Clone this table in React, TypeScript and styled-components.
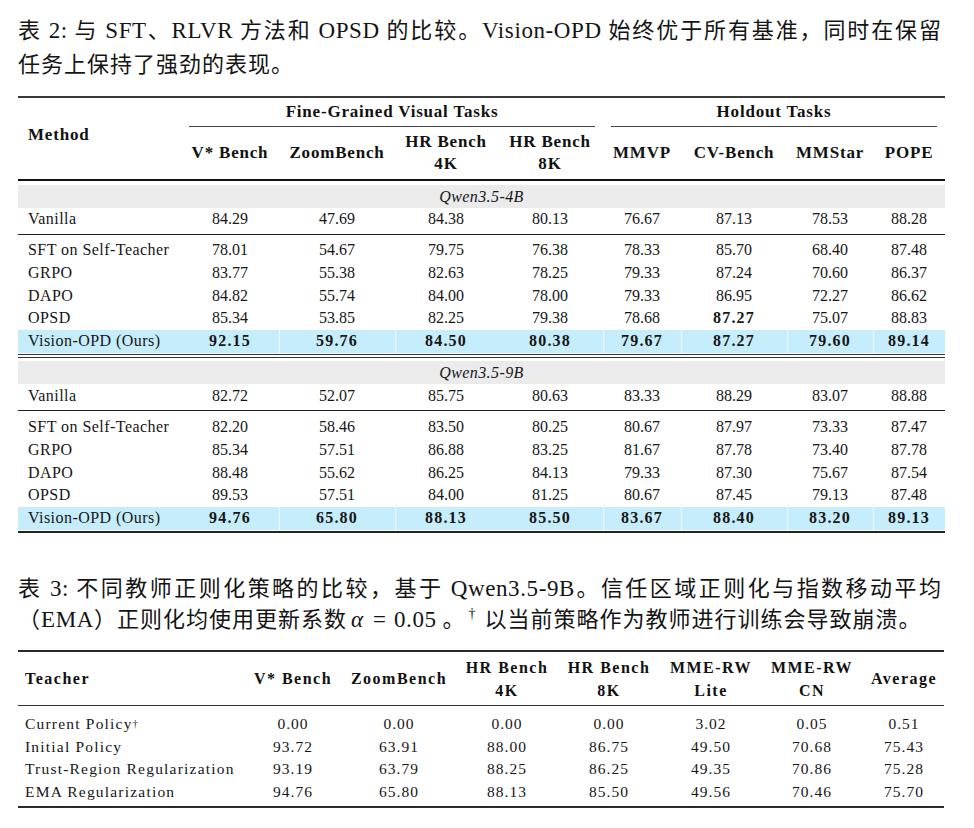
import React from "react";
import styled, { createGlobalStyle } from "styled-components";

const GlobalStyle = createGlobalStyle`
  html, body { margin: 0; padding: 0; background: #ffffff; }
  body {
    font-family: "Liberation Serif", "Noto Sans CJK SC", serif;
    color: #161616;
  }
`;

const T1_COLS = "163px 98px 116px 102px 106px 78px 106px 86px 72px";
const T2_COLS = "228px 94px 118px 98px 106px 98px 104px 80px";

const Page = styled.div`
  width: 974px;
  box-sizing: border-box;
  padding: 11px 29px 20px 18px;
`;

const Caption = styled.div<{ $lh: number; $mt?: number }>`
  width: 924px;
  margin-top: ${(p) => p.$mt ?? 0}px;
  font-family: "Noto Sans CJK SC", sans-serif;
  font-size: 22px;
  line-height: ${(p) => p.$lh}px;
  letter-spacing: 1px;
  color: #141414;
`;

const CaptionLine = styled.div<{ $full?: boolean; $h: number }>`
  height: ${(p) => p.$h}px;
  overflow: visible;
  text-align: ${(p) => (p.$full ? "justify" : "left")};
  text-align-last: ${(p) => (p.$full ? "justify" : "auto")};
`;

const Latin = styled.span`
  font-family: "Liberation Serif", serif;
  font-size: 23px;
  line-height: 1;
  letter-spacing: 0.6px;
`;

const MathItalic = styled.span`
  font-family: "Liberation Serif", serif;
  font-style: italic;
  font-size: 23px;
  line-height: 1;
  margin: 0 2px 0 4px;
`;

const MathOp = styled.span`
  font-family: "Liberation Serif", serif;
  font-size: 23px;
  line-height: 1;
  margin: 0 7px;
`;

const Sup = styled.sup<{ $size: number }>`
  font-family: "Liberation Serif", serif;
  font-size: ${(p) => p.$size}px;
  line-height: 0;
  letter-spacing: 0;
  vertical-align: ${(p) => (p.$size > 12 ? "9px" : "6px")};
  margin: 0 ${(p) => (p.$size > 12 ? 3 : 0)}px;
`;

const Table = styled.div<{ $mt: number; $width: number }>`
  display: flex;
  flex-direction: column;
  width: ${(p) => p.$width}px;
  margin-top: ${(p) => p.$mt}px;
  font-family: "Liberation Serif", serif;
`;

const Rule = styled.div<{ $weight: number; $color?: string; $top?: number; $bottom?: number }>`
  height: ${(p) => p.$weight}px;
  background: ${(p) => p.$color ?? "#222"};
  margin: ${(p) => p.$top ?? 0}px 0 ${(p) => p.$bottom ?? 0}px;
`;

const DoubleRule = styled.div`
  height: 1.5px;
  border-top: 1px solid #333;
  border-bottom: 1px solid #333;
  margin: 1.5px 0 3.75px;
`;

const Head = styled.div<{ $cols: string; $rows: string; $size: number; $ls: number }>`
  display: grid;
  grid-template-columns: ${(p) => p.$cols};
  grid-template-rows: ${(p) => p.$rows};
  font-weight: 700;
  font-size: ${(p) => p.$size}px;
  letter-spacing: ${(p) => p.$ls}px;
  color: #111;
`;

const HeadCell = styled.div<{ $left?: boolean; $span?: boolean; $padLeft?: number; $lift?: number; $lh: number }>`
  display: flex;
  flex-direction: column;
  justify-content: center;
  align-items: ${(p) => (p.$left ? "flex-start" : "center")};
  text-align: center;
  line-height: ${(p) => p.$lh}px;
  white-space: nowrap;
  padding-left: ${(p) => p.$padLeft ?? 0}px;
  padding-bottom: ${(p) => p.$lift ?? 0}px;
  grid-row: ${(p) => (p.$span ? "1 / 3" : "auto")};
`;

const GroupHead = styled.div<{ $from: number; $to: number }>`
  grid-row: 1;
  grid-column: ${(p) => p.$from} / ${(p) => p.$to};
  margin: 0 8px;
  border-bottom: 1px solid #444;
  display: flex;
  align-items: center;
  justify-content: center;
  white-space: nowrap;
`;

const Band = styled.div<{ $mt: number }>`
  height: 23px;
  margin-top: ${(p) => p.$mt}px;
  background: #ebebeb;
  display: flex;
  align-items: center;
  justify-content: center;
  font-style: italic;
  font-size: 16px;
  letter-spacing: 0.4px;
`;

const Row = styled.div<{ $cols: string; $h: number; $highlight?: boolean; $size: number }>`
  display: grid;
  grid-template-columns: ${(p) => p.$cols};
  height: ${(p) => p.$h}px;
  background: ${(p) => (p.$highlight ? "#c6edfb" : "transparent")};
  font-size: ${(p) => p.$size}px;
`;

const Label = styled.div<{ $pad: number; $ls: number }>`
  display: flex;
  align-items: center;
  padding-left: ${(p) => p.$pad}px;
  letter-spacing: ${(p) => p.$ls}px;
  white-space: nowrap;
`;

const Num = styled.div<{ $bold?: boolean; $sep?: boolean; $ls: number }>`
  display: flex;
  align-items: center;
  justify-content: center;
  font-weight: ${(p) => (p.$bold ? 700 : 400)};
  letter-spacing: ${(p) => (p.$bold ? 1.2 : p.$ls)}px;
  box-shadow: ${(p) => (p.$sep ? "inset 1px 0 0 rgba(255,255,255,0.85)" : "none")};
`;

type Val = string | { v: string; b: true };
type DataRowT = { label: React.ReactNode; vals: Val[]; highlight?: boolean };

const B = (v: string): Val => ({ v, b: true });

const group4B: DataRowT[] = [
  { label: "SFT on Self-Teacher", vals: ["78.01", "54.67", "79.75", "76.38", "78.33", "85.70", "68.40", "87.48"] },
  { label: "GRPO", vals: ["83.77", "55.38", "82.63", "78.25", "79.33", "87.24", "70.60", "86.37"] },
  { label: "DAPO", vals: ["84.82", "55.74", "84.00", "78.00", "79.33", "86.95", "72.27", "86.62"] },
  { label: "OPSD", vals: ["85.34", "53.85", "82.25", "79.38", "78.68", B("87.27"), "75.07", "88.83"] },
  { label: "Vision-OPD (Ours)", highlight: true, vals: ["92.15", "59.76", "84.50", "80.38", "79.67", "87.27", "79.60", "89.14"] },
];

const group9B: DataRowT[] = [
  { label: "SFT on Self-Teacher", vals: ["82.20", "58.46", "83.50", "80.25", "80.67", "87.97", "73.33", "87.47"] },
  { label: "GRPO", vals: ["85.34", "57.51", "86.88", "83.25", "81.67", "87.78", "73.40", "87.78"] },
  { label: "DAPO", vals: ["88.48", "55.62", "86.25", "84.13", "79.33", "87.30", "75.67", "87.54"] },
  { label: "OPSD", vals: ["89.53", "57.51", "84.00", "81.25", "80.67", "87.45", "79.13", "87.48"] },
  { label: "Vision-OPD (Ours)", highlight: true, vals: ["94.76", "65.80", "88.13", "85.50", "83.67", "88.40", "83.20", "89.13"] },
];

const vanilla4B: DataRowT = { label: "Vanilla", vals: ["84.29", "47.69", "84.38", "80.13", "76.67", "87.13", "78.53", "88.28"] };
const vanilla9B: DataRowT = { label: "Vanilla", vals: ["82.72", "52.07", "85.75", "80.63", "83.33", "88.29", "83.07", "88.88"] };

const t1Heads: React.ReactNode[] = [
  "V* Bench",
  "ZoomBench",
  <>HR Bench<br />4K</>,
  <>HR Bench<br />8K</>,
  "MMVP",
  "CV-Bench",
  "MMStar",
  "POPE",
];

const SEP_COLS = new Set([1, 2, 4, 5, 6, 7]);

const T1Row: React.FC<{ row: DataRowT; h: number }> = ({ row, h }) => (
  <Row $cols={T1_COLS} $h={h} $highlight={row.highlight} $size={16}>
    <Label $pad={10} $ls={0.45}>{row.label}</Label>
    {row.vals.map((val, i) => {
      const isObj = typeof val !== "string";
      const text = isObj ? val.v : val;
      return (
        <Num key={i} $ls={0} $bold={row.highlight || isObj} $sep={row.highlight && SEP_COLS.has(i)}>
          {text}
        </Num>
      );
    })}
  </Row>
);

const t2Rows: DataRowT[] = [
  { label: <>Current Policy<Sup $size={10}>†</Sup></>, vals: ["0.00", "0.00", "0.00", "0.00", "3.02", "0.05", "0.51"] },
  { label: "Initial Policy", vals: ["93.72", "63.91", "88.00", "86.75", "49.50", "70.68", "75.43"] },
  { label: "Trust-Region Regularization", vals: ["93.19", "63.79", "88.25", "86.25", "49.35", "70.86", "75.28"] },
  { label: "EMA Regularization", vals: ["94.76", "65.80", "88.13", "85.50", "49.56", "70.46", "75.70"] },
];

const t2Heads: React.ReactNode[] = [
  "V* Bench",
  "ZoomBench",
  <>HR Bench<br />4K</>,
  <>HR Bench<br />8K</>,
  <>MME-RW<br />Lite</>,
  <>MME-RW<br />CN</>,
  "Average",
];

export default function App() {
  return (
    <Page>
      <GlobalStyle />
      <Caption $lh={34}>
        <CaptionLine $full $h={34}>
          表 <Latin>2:</Latin> 与 <Latin>SFT</Latin>、<Latin>RLVR</Latin> 方法和 <Latin>OPSD</Latin> 的比较。
          <Latin>Vision-OPD</Latin> 始终优于所有基准，同时在保留
        </CaptionLine>
        <CaptionLine $h={34}>任务上保持了强劲的表现。</CaptionLine>
      </Caption>

      <Table $mt={17} $width={927}>
        <Rule $weight={2} $color="#3a3a3a" />
        <Head $cols={T1_COLS} $rows="29px 52px" $size={17} $ls={0.8}>
          <HeadCell $left $span $padLeft={10} $lift={7} $lh={22}>Method</HeadCell>
          <GroupHead $from={2} $to={6}>Fine-Grained Visual Tasks</GroupHead>
          <GroupHead $from={6} $to={10}>Holdout Tasks</GroupHead>
          {t1Heads.map((h, i) => (
            <HeadCell key={i} $lh={22}>{h}</HeadCell>
          ))}
        </Head>
        <Rule $weight={1.5} $color="#111" />

        <Band $mt={4.5}>Qwen3.5-4B</Band>
        <T1Row row={vanilla4B} h={22} />
        <Rule $weight={1.3} $color="#222" $top={3.5} $bottom={4} />
        {group4B.map((r, i) => (
          <T1Row key={i} row={r} h={22.75} />
        ))}
        <DoubleRule />

        <Band $mt={0}>Qwen3.5-9B</Band>
        <T1Row row={vanilla9B} h={22.75} />
        <Rule $weight={1.3} $color="#222" $top={3} $bottom={4.5} />
        {group9B.map((r, i) => (
          <T1Row key={i} row={r} h={22.75} />
        ))}
        <Rule $weight={2} $color="#222" $top={1.5} />
      </Table>

      <Caption $lh={31} $mt={38}>
        <CaptionLine $full $h={31}>
          表 <Latin>3:</Latin> 不同教师正则化策略的比较，基于 <Latin>Qwen3.5-9B</Latin>。信任区域正则化与指数移动平均
        </CaptionLine>
        <CaptionLine $h={31}>
          （<Latin>EMA</Latin>）正则化均使用更新系数<MathItalic>α</MathItalic>
          <MathOp>=</MathOp><Latin>0.05</Latin> 。<Sup $size={14}>†</Sup> 以当前策略作为教师进行训练会导致崩溃。
        </CaptionLine>
      </Caption>

      <Table $mt={17} $width={926}>
        <Rule $weight={2} $color="#2a2a2a" />
        <Head $cols={T2_COLS} $rows="53px" $size={16} $ls={1.5}>
          <HeadCell $left $padLeft={7} $lh={23}>Teacher</HeadCell>
          {t2Heads.map((h, i) => (
            <HeadCell key={i} $lh={23}>{h}</HeadCell>
          ))}
        </Head>
        <Rule $weight={1.2} $color="#333" $bottom={7} />
        {t2Rows.map((r, i) => (
          <Row key={i} $cols={T2_COLS} $h={22.4} $size={15.5}>
            <Label $pad={7} $ls={1.2}>{r.label}</Label>
            {r.vals.map((v, j) => (
              <Num key={j} $ls={1}>{typeof v === "string" ? v : v.v}</Num>
            ))}
          </Row>
        ))}
        <Rule $weight={2} $color="#2a2a2a" $top={3.5} />
      </Table>
    </Page>
  );
}
